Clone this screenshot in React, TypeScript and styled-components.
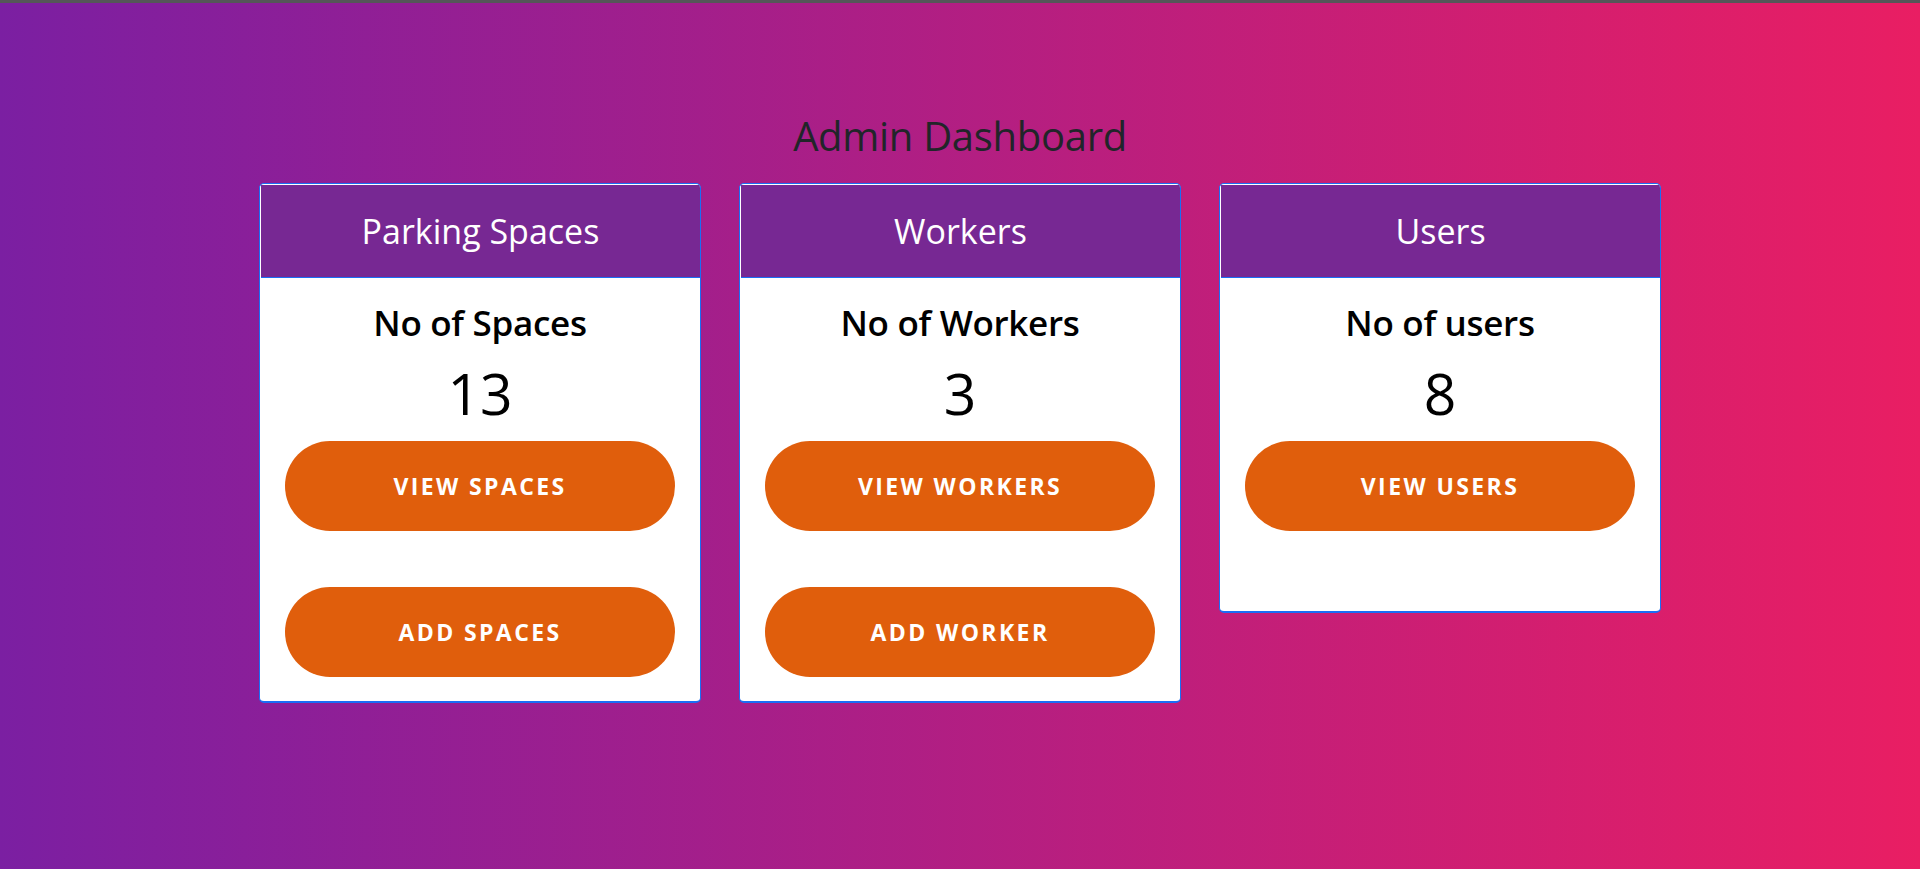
import React from "react";
import styled, { createGlobalStyle } from "styled-components";

const GlobalStyle = createGlobalStyle`
  html, body { margin: 0; padding: 0; }
  body {
    font-family: "Open Sans", "Noto Sans", "Liberation Sans", sans-serif;
    min-height: 100vh;
    background: linear-gradient(to right, #7b1fa2, #e91e63);
  }
`;

const Page = styled.div`
  min-height: 869px;
  box-sizing: border-box;
  border-top: 3px solid #555658;
  display: flex;
  flex-direction: column;
  align-items: center;
`;

const Title = styled.h1`
  margin: 86px 0 0;
  height: 94px;
  font-size: 40px;
  font-weight: 400;
  line-height: 94px;
  color: #212529;
  letter-spacing: -0.3px;
`;

const Row = styled.div`
  display: flex;
  justify-content: center;
  align-items: flex-start;
  gap: 38px;
`;

const Card = styled.div`
  width: 442px;
  box-sizing: border-box;
  background: #ffffff;
  border: 1px solid #1a6ef5;
  border-bottom-width: 2px;
  border-radius: 5px;
  overflow: hidden;
  display: flex;
  flex-direction: column;
`;

const Header = styled.div`
  height: 92px;
  margin-top: 1px;
  margin-left: 1px;
  background: #772893;
  border-bottom: 1px solid #1a6ef5;
  display: flex;
  align-items: center;
  justify-content: center;
  color: #ffffff;
  font-size: 34px;
  font-weight: 400;
`;

const Body = styled.div<{ $padBottom: number }>`
  padding: 22px 25px ${(p) => p.$padBottom}px;
  display: flex;
  flex-direction: column;
  align-items: center;
`;

const Label = styled.h2`
  margin: 0;
  font-size: 35px;
  font-weight: 600;
  line-height: 46px;
  color: #000;
  letter-spacing: -0.3px;
`;

const Count = styled.div`
  font-size: 57px;
  font-weight: 400;
  line-height: 70px;
  margin-top: 12px;
  color: #000;
`;

const Buttons = styled.div`
  align-self: stretch;
  display: flex;
  flex-direction: column;
  gap: 56px;
  margin-top: 13px;
`;

const Button = styled.button`
  height: 90px;
  border: none;
  border-radius: 45px;
  background: #e05e0c;
  color: #ffffff;
  font-family: inherit;
  font-size: 23px;
  font-weight: 700;
  letter-spacing: 2.4px;
  text-transform: uppercase;
  cursor: pointer;
`;

type CardData = {
  title: string;
  label: string;
  count: number;
  actions: string[];
  padBottom: number;
};

const cards: CardData[] = [
  { title: "Parking Spaces", label: "No of Spaces", count: 13, actions: ["View Spaces", "Add Spaces"], padBottom: 24 },
  { title: "Workers", label: "No of Workers", count: 3, actions: ["View Workers", "Add Worker"], padBottom: 24 },
  { title: "Users", label: "No of users", count: 8, actions: ["View Users"], padBottom: 80 },
];

export default function App() {
  return (
    <>
      <GlobalStyle />
      <Page>
        <Title>Admin Dashboard</Title>
        <Row>
          {cards.map((c) => (
            <Card key={c.title}>
              <Header>{c.title}</Header>
              <Body $padBottom={c.padBottom}>
                <Label>{c.label}</Label>
                <Count>{c.count}</Count>
                <Buttons>
                  {c.actions.map((a) => (
                    <Button key={a}>{a}</Button>
                  ))}
                </Buttons>
              </Body>
            </Card>
          ))}
        </Row>
      </Page>
    </>
  );
}
